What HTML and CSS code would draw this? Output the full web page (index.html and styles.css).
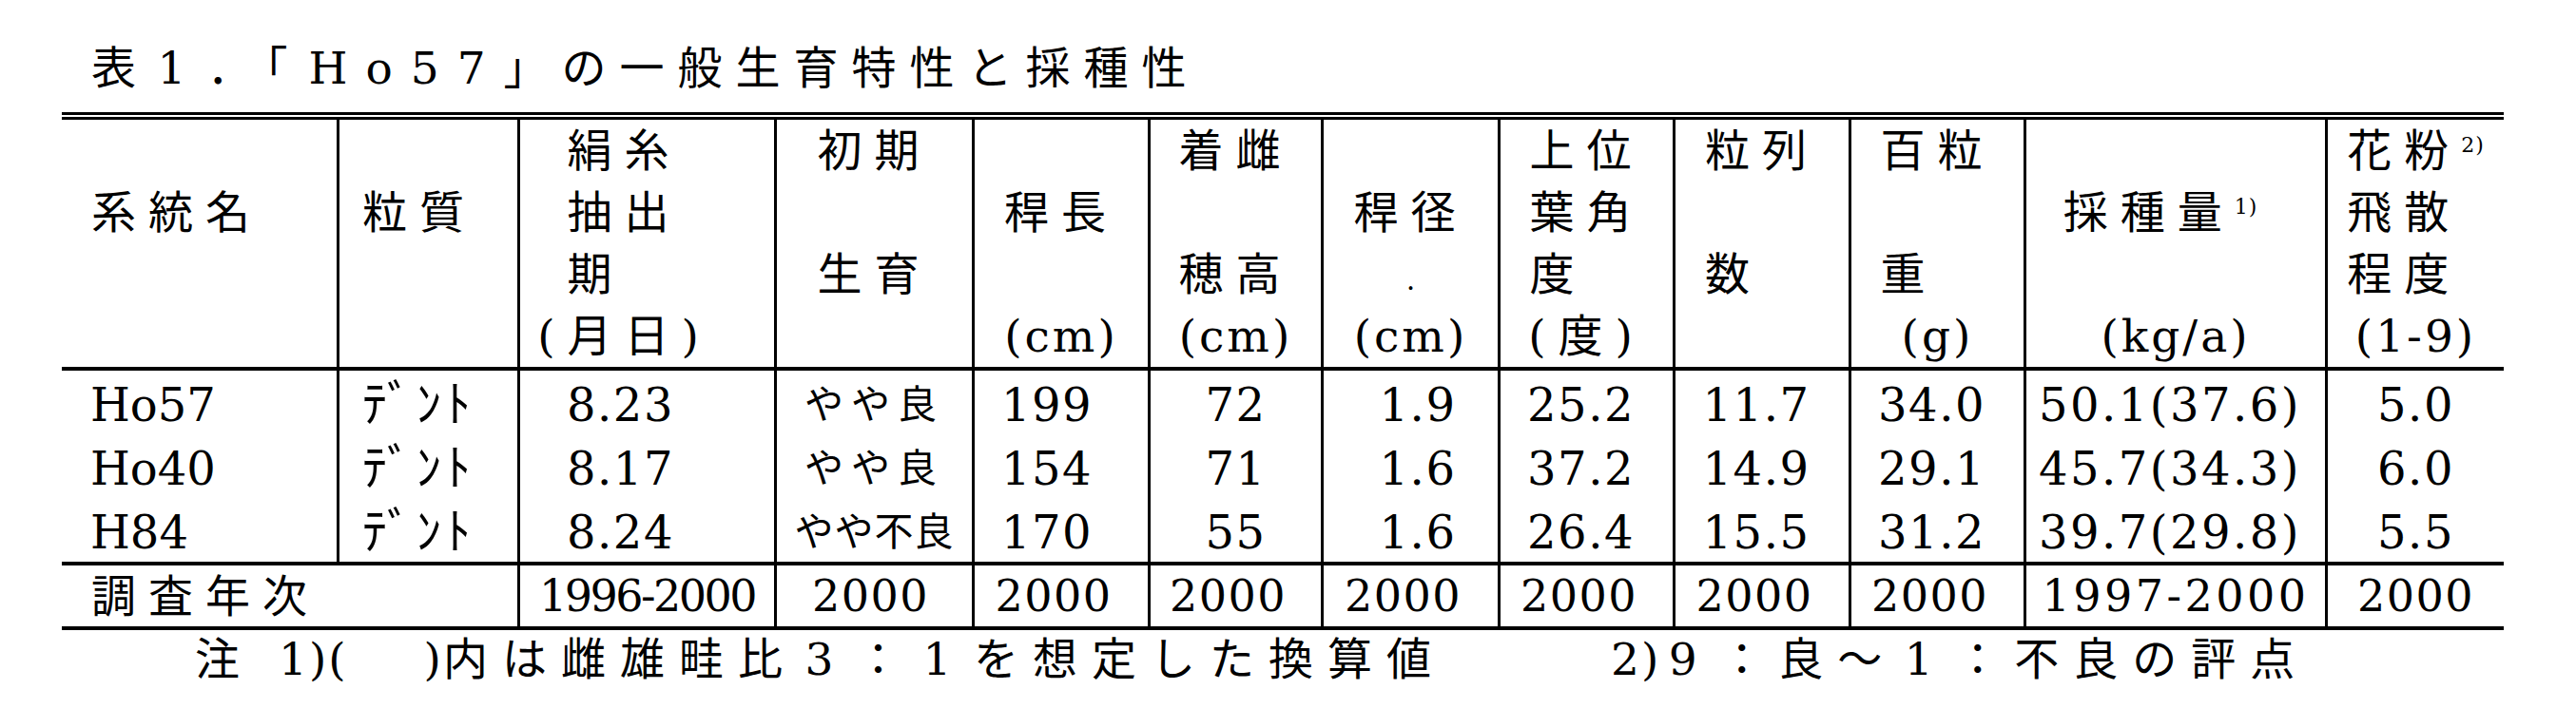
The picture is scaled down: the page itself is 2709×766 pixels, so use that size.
FILE: index.html
```html
<!DOCTYPE html>
<html lang="ja">
<head>
<meta charset="utf-8">
<title>表1．「Ho57」の一般生育特性と採種性</title>
<link rel="stylesheet" href="styles.css">
</head>
<body>
<div class="page">
  <div class="title">表<span class="fw">1</span>．「<span class="lat">Ho57</span>」の一般生育特性と採種性</div>

  <table class="tbl">
    <tr class="hd">
      <th class="w1 left"><div class="ln"></div><div class="ln">系統名</div><div class="ln"></div><div class="ln"></div></th>
      <th class="w2 vl left2"><div class="ln"></div><div class="ln">粒質</div><div class="ln"></div><div class="ln"></div></th>
      <th class="w3 vl shift3">
        <div class="blk"><div class="ln">絹糸</div><div class="ln">抽出</div><div class="ln">期</div></div>
        <div class="ln">(月日)</div>
      </th>
      <th class="w4 vl"><div class="ln">初期</div><div class="ln"></div><div class="ln">生育</div><div class="ln"></div></th>
      <th class="w5 vl"><div class="ln"></div><div class="ln">稈長</div><div class="ln"></div><div class="ln"><span class="u">(cm)</span></div></th>
      <th class="w6 vl"><div class="ln">着雌</div><div class="ln"></div><div class="ln">穂高</div><div class="ln"><span class="u">(cm)</span></div></th>
      <th class="w7 vl"><div class="ln"></div><div class="ln">稈径</div><div class="ln"><span class="speck">.</span></div><div class="ln"><span class="u">(cm)</span></div></th>
      <th class="w8 vl">
        <div class="blk"><div class="ln">上位</div><div class="ln">葉角</div><div class="ln">度</div></div>
        <div class="ln">(度)</div>
      </th>
      <th class="w9 vl">
        <div class="blk"><div class="ln">粒列</div><div class="ln"></div><div class="ln">数</div></div>
        <div class="ln"></div>
      </th>
      <th class="w10 vl">
        <div class="blk"><div class="ln">百粒</div><div class="ln"></div><div class="ln">重</div></div>
        <div class="ln"><span class="u">(g)</span></div>
      </th>
      <th class="w11 vl"><div class="ln"></div><div class="ln yield">採種量<span class="sup">1)</span></div><div class="ln"></div><div class="ln"><span class="u">(kg/a)</span></div></th>
      <th class="w12 vl">
        <div class="blk"><div class="ln">花粉<span class="sup">2)</span></div><div class="ln">飛散</div><div class="ln">程度</div></div>
        <div class="ln"><span class="u">(1-9)</span></div>
      </th>
    </tr>

    <tr class="dr">
      <td class="name">Ho57</td>
      <td class="vl kind">ﾃﾞﾝﾄ</td>
      <td class="vl d3">8.23</td>
      <td class="vl kana">やや良</td>
      <td class="vl d5">199</td>
      <td class="vl">72</td>
      <td class="vl d7">1.9</td>
      <td class="vl d8">25.2</td>
      <td class="vl d8">11.7</td>
      <td class="vl d8">34.0</td>
      <td class="vl d8 wide">50.1(37.6)</td>
      <td class="vl">5.0</td>
    </tr>
    <tr class="dr">
      <td class="name">Ho40</td>
      <td class="vl kind">ﾃﾞﾝﾄ</td>
      <td class="vl d3">8.17</td>
      <td class="vl kana">やや良</td>
      <td class="vl d5">154</td>
      <td class="vl">71</td>
      <td class="vl d7">1.6</td>
      <td class="vl d8">37.2</td>
      <td class="vl d8">14.9</td>
      <td class="vl d8">29.1</td>
      <td class="vl d8 wide">45.7(34.3)</td>
      <td class="vl">6.0</td>
    </tr>
    <tr class="dr">
      <td class="name">H84</td>
      <td class="vl kind">ﾃﾞﾝﾄ</td>
      <td class="vl d3">8.24</td>
      <td class="vl kana tight">やや不良</td>
      <td class="vl d5">170</td>
      <td class="vl">55</td>
      <td class="vl d7">1.6</td>
      <td class="vl d8">26.4</td>
      <td class="vl d8">15.5</td>
      <td class="vl d8">31.2</td>
      <td class="vl d8 wide">39.7(29.8)</td>
      <td class="vl">5.5</td>
    </tr>

    <tr class="sr">
      <td class="lbl" colspan="2">調査年次</td>
      <td class="vl narrow">1996-2000</td>
      <td class="vl s4">2000</td>
      <td class="vl s">2000</td>
      <td class="vl s">2000</td>
      <td class="vl s">2000</td>
      <td class="vl s">2000</td>
      <td class="vl s">2000</td>
      <td class="vl s">2000</td>
      <td class="vl spread">1997-2000</td>
      <td class="vl">2000</td>
    </tr>
  </table>

  <div class="foot">
    <span class="fn1">注<span class="lat fn-a">1)(</span><span class="lat fn-b">)</span>内は雌雄畦比<span class="fw">3</span>：<span class="fw">1</span>を想定した換算値</span>
    <span class="fn2"><span class="lat">2)</span><span class="fw">9</span>：良～<span class="fw">1</span>：不良の評点</span>
  </div>
</div>
</body>
</html>
```

FILE: styles.css
```css
body {
  margin: 0;
  background: #ffffff;
  color: #000000;
  font-family: "DejaVu Serif", "Noto Sans CJK JP", serif;
}

.page {
  width: 2709px;
}

/* ---------- title ---------- */
.title {
  margin: 42px 0 0 96px;
  height: 60px;
  line-height: 60px;
  font-size: 47px;
  letter-spacing: 14px;
  white-space: nowrap;
}

.title .lat {
  margin-left: 8px;
  letter-spacing: 19px;
}

.fw {
  display: inline-block;
  width: 47px;
  text-align: center;
  letter-spacing: 0;
  margin-right: 14px;
}

/* ---------- table ---------- */
.tbl {
  margin: 16px 0 0 65px;
  width: 2568px;
  table-layout: fixed;
  border-collapse: separate;
  border-spacing: 0;
  border-top: 8px double #000;
}

.tbl th,
.tbl td {
  padding: 0;
  box-sizing: border-box;
  font-weight: normal;
  white-space: nowrap;
}

.vl {
  border-left: 3px solid #000;
}

.w1 { width: 289px; }
.w2 { width: 190px; }
.w3 { width: 270px; }
.w4 { width: 208px; }
.w5 { width: 185px; }
.w6 { width: 182px; }
.w7 { width: 186px; }
.w8 { width: 184px; }
.w9 { width: 185px; }
.w10 { width: 184px; }
.w11 { width: 317px; }
.w12 { width: 188px; }

/* header */
.hd th {
  vertical-align: top;
  text-align: center;
  font-size: 47px;
  letter-spacing: 13px;
  border-bottom: 4px solid #000;
}

.hd th.left {
  text-align: left;
  padding-left: 31px;
}

.hd th.left2 {
  text-align: left;
  padding-left: 24px;
}

.hd th.shift3 {
  padding-right: 48px;
}

.ln {
  height: 65px;
  line-height: 65px;
}

.blk {
  width: fit-content;
  margin: 0 auto;
  text-align: left;
}

.u {
  letter-spacing: 3px;
}

.speck {
  font-size: 30px;
  letter-spacing: 0;
}

.yield {
  padding-right: 32px;
}

.sup {
  font-size: 22px;
  letter-spacing: 1px;
  line-height: 0;
  vertical-align: 15px;
}

/* data rows */
.dr {
  height: 67px;
}

.dr td {
  vertical-align: middle;
  text-align: center;
  font-size: 48px;
  line-height: 1;
  letter-spacing: 1.5px;
  padding-top: 5px;
}

.dr td.name {
  text-align: left;
  padding-left: 30px;
  letter-spacing: 0;
}

.dr td.kind {
  text-align: left;
  padding-left: 24px;
  font-size: 52px;
  letter-spacing: 5px;
}

.dr td.d3 {
  padding-right: 56px;
}

.dr td.kana {
  font-size: 41px;
  letter-spacing: 8px;
}

.dr td.kana.tight {
  letter-spacing: 1px;
}

.dr td.d5 {
  padding-right: 30px;
}

.dr td.d7 {
  padding-left: 15px;
}

.dr td.d8 {
  padding-right: 12px;
}

.dr td.wide {
  letter-spacing: 2.5px;
}

/* survey-year row */
.sr {
  height: 72px;
}

.sr td {
  vertical-align: middle;
  text-align: center;
  font-size: 46px;
  line-height: 1;
  letter-spacing: 1.5px;
  border-top: 4px solid #000;
  border-bottom: 4px solid #000;
}

.sr td.lbl {
  text-align: left;
  padding-left: 31px;
  font-size: 47px;
  letter-spacing: 13px;
}

.sr td.narrow {
  letter-spacing: -2.5px;
}

.sr td.s4 {
  padding-right: 8px;
}

.sr td.s {
  padding-right: 16px;
}

.sr td.spread {
  letter-spacing: 3.5px;
}

/* ---------- footnote ---------- */
.foot {
  display: flex;
  margin-top: 1px;
  padding-left: 205px;
  height: 60px;
  line-height: 60px;
  font-size: 47px;
  letter-spacing: 15px;
  white-space: nowrap;
}

.fn1 {
  flex: none;
  width: 1489px;
}

.fn2 {
  flex: none;
}

.foot .lat {
  letter-spacing: 2px;
}

.foot .fw {
  margin-right: 15px;
}

.fn-a {
  margin-left: 26px;
}

.fn-b {
  margin-left: 80px;
}
```
